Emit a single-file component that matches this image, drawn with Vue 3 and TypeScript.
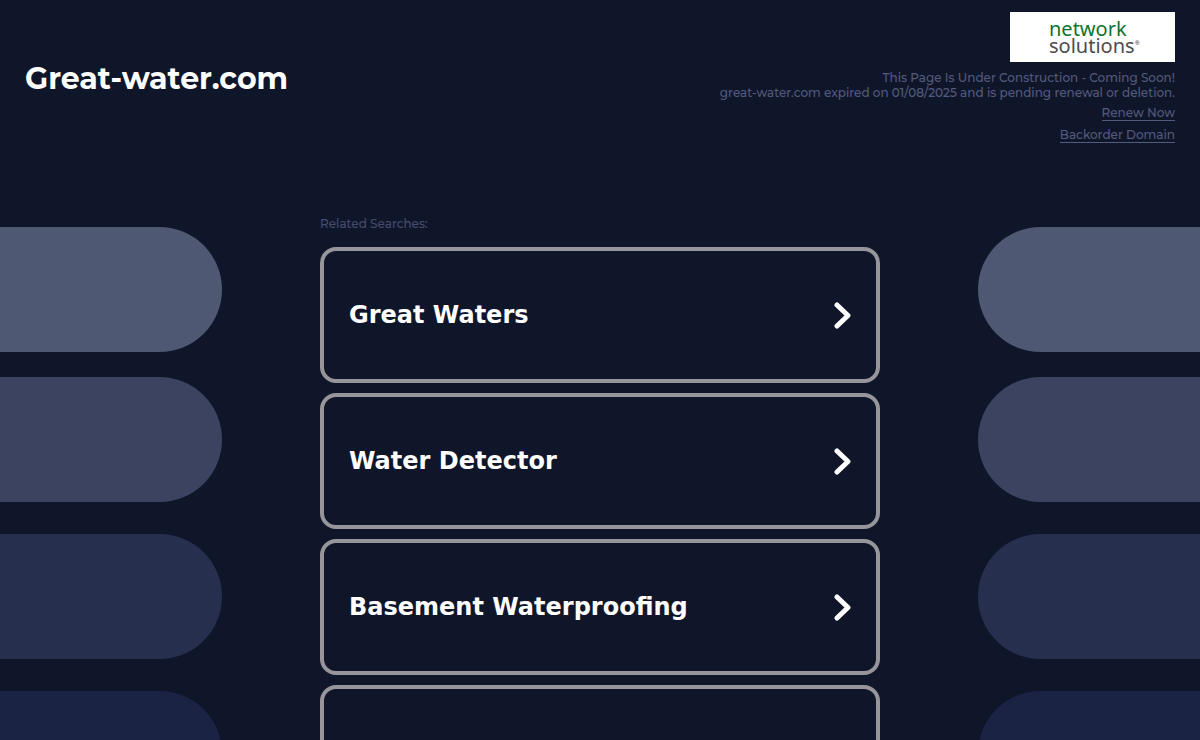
<script setup lang="ts">
interface Search {
  id: number
  label: string
}

const searches: Search[] = [
  { id: 1, label: 'Great Waters' },
  { id: 2, label: 'Water Detector' },
  { id: 3, label: 'Basement Waterproofing' },
  { id: 4, label: '' },
]

const tones: string[] = ['tone-1', 'tone-2', 'tone-3', 'tone-4']
</script>

<template>
  <div class="page">
    <header class="header">
      <h1 class="domain">Great-water.com</h1>
      <div class="notice">
        <a class="logo" href="#">
          <span class="logo-top">network</span>
          <span class="logo-bottom">solutions<sup class="mark">®</sup></span>
        </a>
        <p class="message">
          This Page Is Under Construction - Coming Soon!<br />
          great-water.com expired on 01/08/2025 and is pending renewal or deletion.
        </p>
        <a class="action" href="#">Renew Now</a>
        <a class="action" href="#">Backorder Domain</a>
      </div>
    </header>

    <main class="main">
      <div class="pills left" aria-hidden="true">
        <div v-for="tone in tones" :key="tone" class="pill" :class="tone"></div>
      </div>
      <section class="related">
        <h2 class="related-title">Related Searches:</h2>
        <nav class="list">
          <a v-for="search in searches" :key="search.id" class="card" href="#">
            <span>{{ search.label }}</span>
            <svg class="chevron" viewBox="0 0 18 28" aria-hidden="true">
              <path d="M4 4 L15 14.5 L4 25" />
            </svg>
          </a>
        </nav>
      </section>
      <div class="pills right" aria-hidden="true">
        <div v-for="tone in tones" :key="tone" class="pill" :class="tone"></div>
      </div>
    </main>
  </div>
</template>

<style>
body {
  margin: 0;
  background: #10162a;
}
</style>

<style scoped>
.page {
  height: 100vh;
  overflow: hidden;
  background: #10162a;
  color: #535a7d;
  font-family: Montserrat, Inter, "Open Sans", sans-serif;
}

.header {
  display: flex;
  justify-content: space-between;
  align-items: flex-start;
  gap: 24px;
  padding: 12px 25px 0;
}

.domain {
  margin: 49px 0 0;
  font-size: 30px;
  line-height: 36px;
  font-weight: 700;
  color: #fff;
}

.notice {
  display: flex;
  flex-direction: column;
  align-items: flex-end;
  text-align: right;
  font-size: 12px;
  line-height: 15px;
  font-weight: 500;
}

.logo {
  box-sizing: border-box;
  display: flex;
  flex-direction: column;
  width: 165px;
  height: 50px;
  padding: 8px 0 0 39px;
  background: #fff;
  text-align: left;
  text-decoration: none;
  font-family: "Noto Sans", sans-serif;
  font-size: 20px;
  line-height: 17px;
  font-weight: 400;
}

.logo-top {
  color: #0b7430;
}

.logo-bottom {
  color: #4d4a50;
}

.mark {
  font-size: 6px;
  line-height: 6px;
}

.message {
  margin: 8px 0 5px;
}

.action {
  margin-bottom: 6px;
  border-bottom: 1px solid #535a7d;
  color: #535a7d;
  text-decoration: none;
}

.main {
  display: grid;
  grid-template-columns: minmax(0, 222px) minmax(0, 560px) minmax(0, 222px);
  justify-content: space-between;
  margin-top: 67px;
}

.related-title {
  margin: 0 0 16px;
  font-size: 12px;
  line-height: 15px;
  font-weight: 500;
  color: #464c6e;
}

.list {
  display: flex;
  flex-direction: column;
  gap: 10px;
}

.card {
  box-sizing: border-box;
  display: flex;
  align-items: center;
  justify-content: space-between;
  height: 136px;
  padding: 0 25px;
  border: 4px solid #96969a;
  border-radius: 16px;
  color: #fff;
  font-family: "DejaVu Sans", sans-serif;
  font-size: 24px;
  line-height: 36px;
  font-weight: 700;
  text-decoration: none;
}

.chevron {
  width: 18px;
  height: 28px;
  fill: none;
  stroke: #fff;
  stroke-width: 5;
  stroke-linecap: round;
  stroke-linejoin: round;
}

.pills {
  display: flex;
  flex-direction: column;
  gap: 32px;
  padding-top: 11px;
}

.pill {
  height: 125px;
}

.left .pill {
  border-radius: 0 63px 63px 0;
}

.right .pill {
  border-radius: 63px 0 0 63px;
}

.tone-1 {
  margin-bottom: -7px;
  background: #4f5872;
}

.tone-2 {
  background: #3c4361;
}

.tone-3 {
  background: #272f4e;
}

.tone-4 {
  background: #1b2344;
}
</style>
